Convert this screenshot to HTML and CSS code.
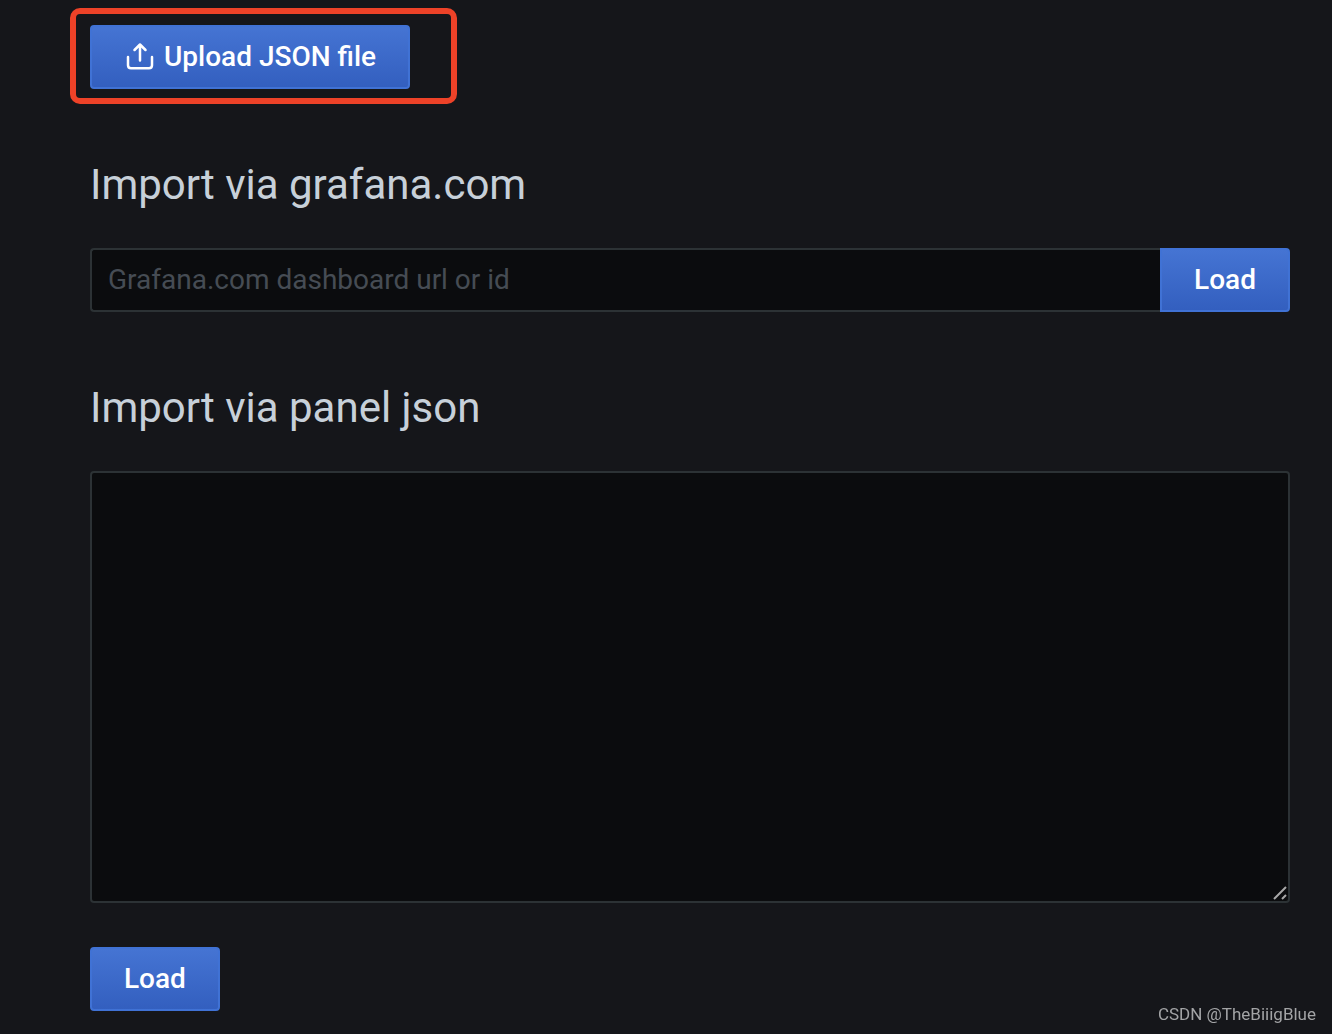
FILE: index.html
```html
<!DOCTYPE html>
<html lang="en">
<head>
<meta charset="utf-8">
<title>Import dashboard</title>
<link rel="stylesheet" href="styles.css">
</head>
<body>
<main class="page">
  <div class="highlight">
    <button class="button button-upload" type="button">
      <svg class="icon" viewBox="0 0 32 32" aria-hidden="true"><path d="M16 19.500V3.500M10.500 9L16 3.500L21.500 9M4 16v8.200q0 3 3 3h18q3 0 3-3V16"/></svg>
      Upload JSON file
    </button>
  </div>
  <form class="section">
    <h2 class="heading"><label for="dashboard">Import via grafana.com</label></h2>
    <div class="row">
      <input class="field" id="dashboard" type="text" placeholder="Grafana.com dashboard url or id">
      <button class="button button-joined" type="button">Load</button>
    </div>
  </form>
  <form class="section">
    <h2 class="heading"><label for="json">Import via panel json</label></h2>
    <div class="editor">
      <textarea class="field area" id="json"></textarea>
      <svg class="grip" viewBox="0 0 16 16" aria-hidden="true"><path d="M2 14L14 2M10 14l4-4"/></svg>
    </div>
    <button class="button" type="button">Load</button>
  </form>
</main>
<footer class="credit">CSDN @TheBiiigBlue</footer>
</body>
</html>
```
FILE: styles.css
```css
* { box-sizing: border-box; }
body {
  margin: 0;
  background: #15161a;
  color: #c7d0d9;
  font-family: Roboto, sans-serif;
}
.page { padding: 8px 42px 0 90px; }
.highlight {
  width: 387px;
  margin-left: -20px;
  padding: 11px 14px 9px;
  border: 6px solid #ed4228;
  border-radius: 10px;
}
.button {
  height: 64px;
  padding: 0 32px;
  border: 2px solid #4072d5;
  border-radius: 4px;
  background: linear-gradient(#4574d3, #335fbf);
  color: #fff;
  font: 500 28px/32px Roboto, sans-serif;
}
.button-upload {
  display: flex;
  align-items: center;
  gap: 8px;
}
.icon {
  width: 32px;
  height: 32px;
  fill: none;
  stroke: currentColor;
  stroke-width: 2.500;
  stroke-linecap: round;
  stroke-linejoin: round;
}
.section { margin-top: 56px; }
.section + .section { margin-top: 71px; }
.heading {
  margin: 0 0 38px;
  font-size: 42px;
  font-weight: 400;
  line-height: 50px;
}
.row { display: flex; }
.field {
  width: 100%;
  padding: 0 16px;
  border: 2px solid #2c3235;
  border-radius: 4px;
  outline: 0;
  background: #0b0c0e;
  color: #c7d0d9;
  font: 400 28px/32px Roboto, sans-serif;
}
.row .field {
  flex: 1;
  min-width: 0;
  border-right: 0;
  border-radius: 4px 0 0 4px;
}
.field::placeholder { color: #464c54; opacity: 1; }
.button-joined { border-radius: 0 4px 4px 0; }
.editor { position: relative; margin-bottom: 44px; }
.area {
  display: block;
  height: 432px;
  padding: 16px;
  resize: none;
}
.grip {
  position: absolute;
  right: 2px;
  bottom: 2px;
  width: 16px;
  height: 16px;
  fill: none;
  stroke: #a8a8a8;
  stroke-width: 2;
}
.credit {
  position: fixed;
  right: 16px;
  bottom: 10px;
  color: #a3a4a6;
  font-size: 17px;
  line-height: 20px;
}
```
